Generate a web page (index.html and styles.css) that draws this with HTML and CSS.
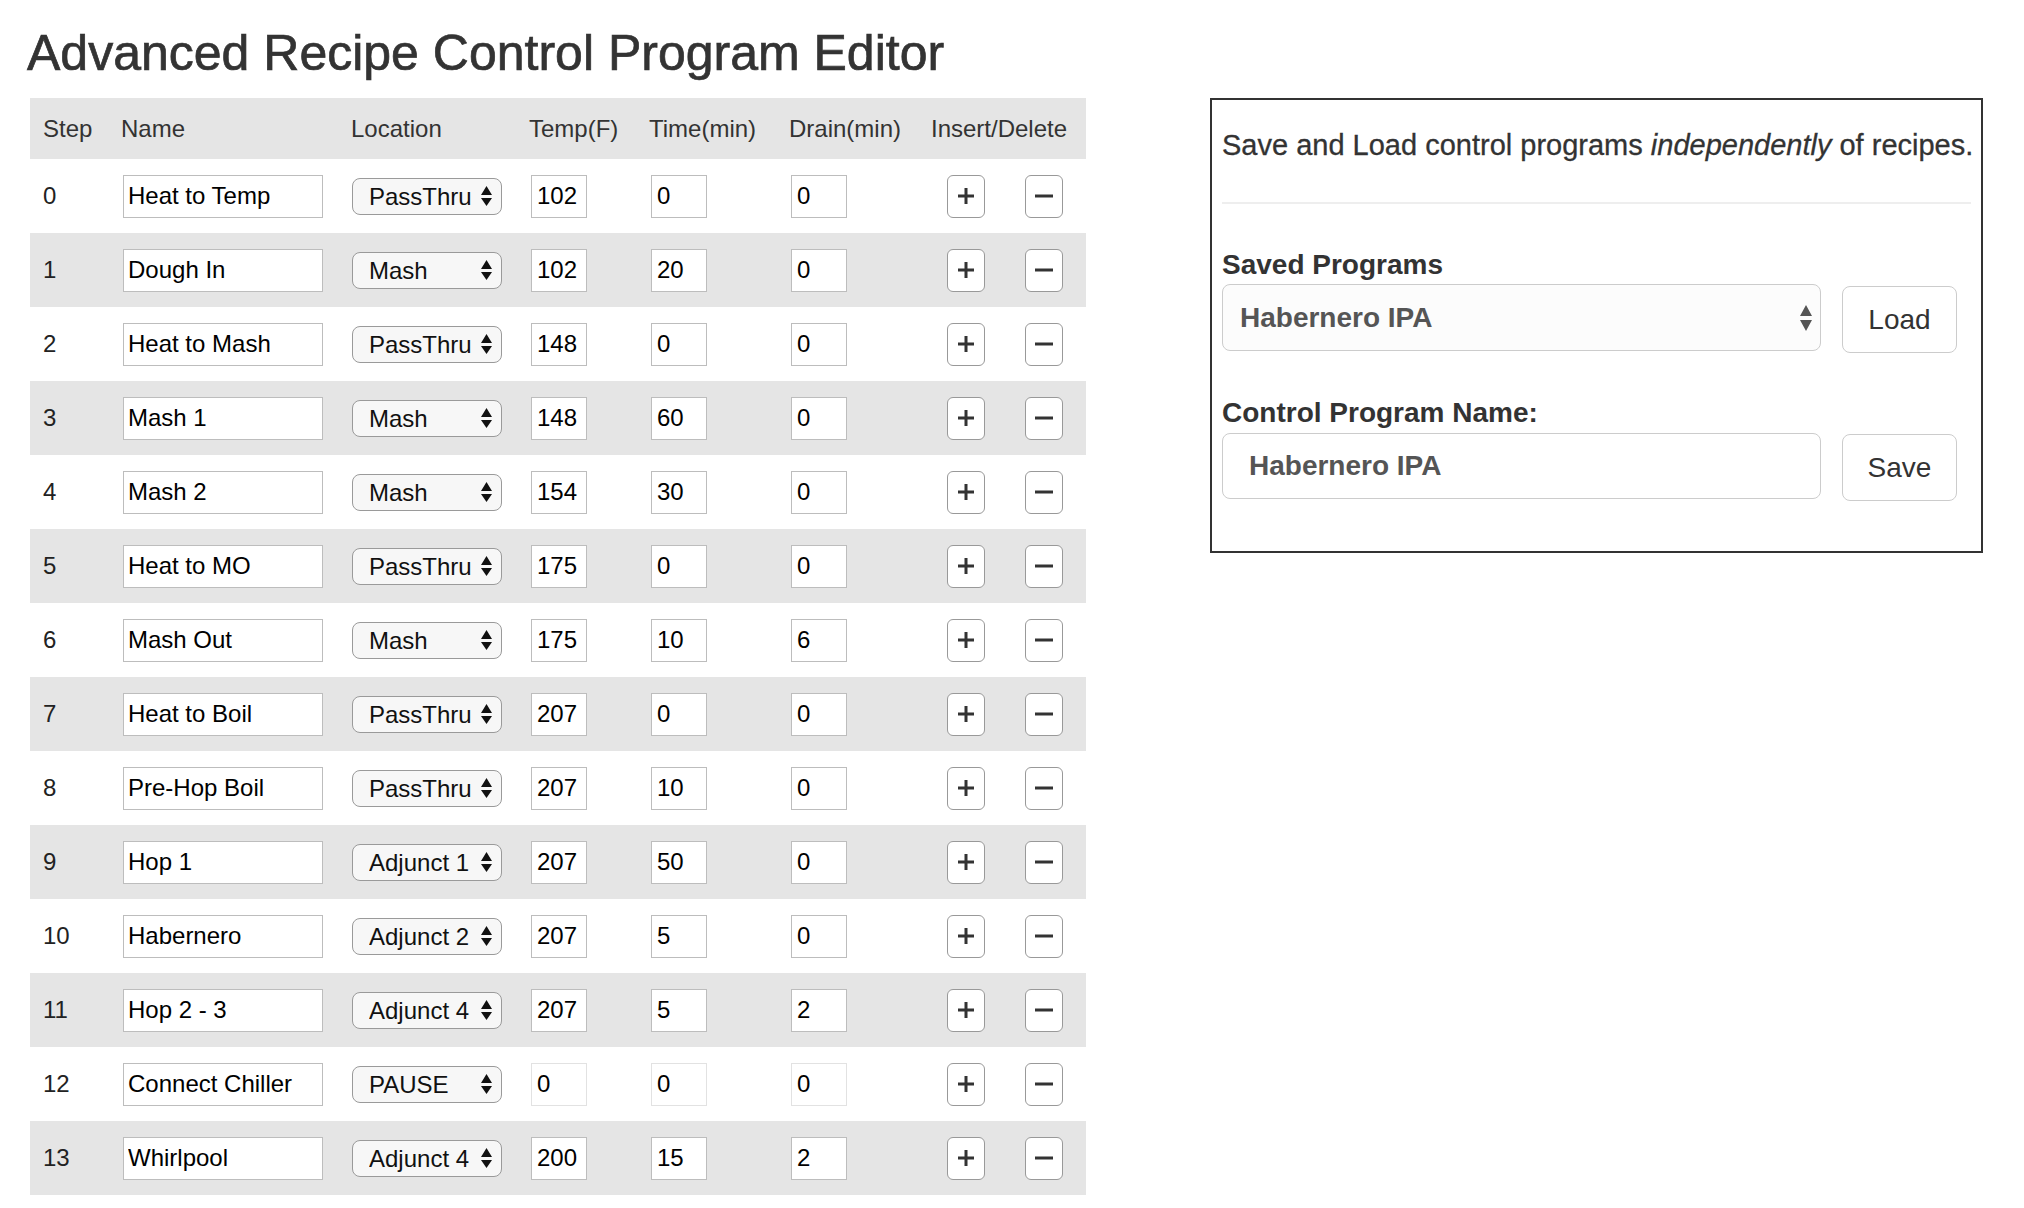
FILE: index.html
```html
<!DOCTYPE html>
<html lang="en">
<head>
    <meta charset="UTF-8">
    <title>Advanced Recipe Control Program Editor</title>
    <link rel="stylesheet" href="styles.css">
</head>
<body>
    <div class="page">
        <h1 class="title">Advanced Recipe Control Program Editor</h1>
        <div class="layout">
            <table class="steps">
                <colgroup>
                    <col class="c-step"><col class="c-name"><col class="c-loc"><col class="c-temp"><col class="c-time"><col class="c-drain"><col class="c-act">
                </colgroup>
                <thead>
                    <tr>
                        <th>Step</th><th>Name</th><th>Location</th><th>Temp(F)</th><th>Time(min)</th><th>Drain(min)</th><th>Insert/Delete</th>
                    </tr>
                </thead>
                <tbody id="step-body"></tbody>
            </table>

            <div class="panel">
                <p class="panel-intro">Save and Load control programs <em>independently</em> of recipes.</p>
                <hr>
                <label class="panel-label" for="saved">Saved Programs</label>
                <div class="panel-row">
                    <span class="select-wrap big">
                        <select id="saved" class="panel-select">
                            <option selected>Habernero IPA</option>
                            <option>Pale Ale</option>
                        </select>
                        <svg class="arrows" width="12" height="26" viewBox="0 0 12 26"><path d="M6 0L12 11H0Z M6 26L12 15H0Z" fill="#555"/></svg>
                    </span>
                    <button class="panel-btn load">Load</button>
                </div>
                <label class="panel-label second" for="prog-name">Control Program Name:</label>
                <div class="panel-row">
                    <input id="prog-name" class="panel-input" type="text" value="Habernero IPA">
                    <button class="panel-btn save">Save</button>
                </div>
            </div>
        </div>
    </div>

    <script>
        const steps = [
            ['Heat to Temp', 'PassThru', 102, 0, 0],
            ['Dough In', 'Mash', 102, 20, 0],
            ['Heat to Mash', 'PassThru', 148, 0, 0],
            ['Mash 1', 'Mash', 148, 60, 0],
            ['Mash 2', 'Mash', 154, 30, 0],
            ['Heat to MO', 'PassThru', 175, 0, 0],
            ['Mash Out', 'Mash', 175, 10, 6],
            ['Heat to Boil', 'PassThru', 207, 0, 0],
            ['Pre-Hop Boil', 'PassThru', 207, 10, 0],
            ['Hop 1', 'Adjunct 1', 207, 50, 0],
            ['Habernero', 'Adjunct 2', 207, 5, 0],
            ['Hop 2 - 3', 'Adjunct 4', 207, 5, 2],
            ['Connect Chiller', 'PAUSE', 0, 0, 0],
            ['Whirlpool', 'Adjunct 4', 200, 15, 2]
        ];
        const locations = ['PassThru', 'Mash', 'Adjunct 1', 'Adjunct 2', 'Adjunct 3', 'Adjunct 4', 'PAUSE'];

        const body = document.getElementById('step-body');
        steps.forEach((s, i) => {
            const opts = locations.map(l => `<option${l === s[1] ? ' selected' : ''}>${l}</option>`).join('');
            const numClass = s[1] === 'PAUSE' ? 'num faded' : 'num';
            const row = document.createElement('tr');
            row.innerHTML = `
                <td>${i}</td>
                <td><input class="name" type="text" value="${s[0]}"></td>
                <td><span class="select-wrap"><select class="loc">${opts}</select><svg class="arrows" width="11" height="20" viewBox="0 0 11 20"><path d="M5.5 0L11 9H0Z M5.5 20L11 12H0Z" fill="#111"/></svg></span></td>
                <td><input class="${numClass}" type="text" value="${s[2]}"></td>
                <td><input class="${numClass}" type="text" value="${s[3]}"></td>
                <td><input class="${numClass}" type="text" value="${s[4]}"></td>
                <td>
                    <div class="actions">
                        <button class="btn-step" title="Insert"><svg width="18" height="18" viewBox="0 0 18 18"><path d="M9 1V17M1 9H17" stroke="#333" stroke-width="3"/></svg></button>
                        <button class="btn-step" title="Delete"><svg width="18" height="18" viewBox="0 0 18 18"><path d="M0 9H18" stroke="#333" stroke-width="3"/></svg></button>
                    </div>
                </td>`;
            body.appendChild(row);
        });
    </script>
</body>
</html>
```

FILE: styles.css
```css
body {
    margin: 0;
    font-family: "Liberation Sans", Arial, sans-serif;
    color: #333;
    background-color: #fff;
}
.page {
    padding: 26px 30px 0 30px;
}
.title {
    margin: 0 0 17px -3px;
    font-size: 50px;
    line-height: 55px;
    font-weight: normal;
    -webkit-text-stroke: 0.7px #333;
    color: #333;
}
.layout {
    display: flex;
    align-items: flex-start;
    gap: 124px;
}

/* step table */
.steps {
    width: 1056px;
    table-layout: fixed;
    border-collapse: collapse;
    font-size: 24px;
    color: #222;
}
.c-step { width: 78px; }
.c-name { width: 230px; }
.c-loc { width: 178px; }
.c-temp { width: 120px; }
.c-time { width: 140px; }
.c-drain { width: 142px; }
.c-act { width: 168px; }
.steps th {
    height: 61px;
    padding: 0 0 0 13px;
    text-align: left;
    font-weight: normal;
    color: #333;
    background-color: #e5e5e5;
    white-space: nowrap;
}
.steps td {
    height: 74px;
    padding: 0 0 0 13px;
    vertical-align: middle;
}
.steps tbody tr:nth-child(even) {
    background-color: #e5e5e5;
}
.steps input {
    box-sizing: border-box;
    height: 43px;
    margin: 0 0 0 2px;
    padding: 0 4px;
    border: 1px solid #bdbdbd;
    border-radius: 0;
    font-family: inherit;
    font-size: 24px;
    color: #000;
    background-color: #fff;
    vertical-align: middle;
}
.steps input.name { width: 200px; }
.steps input.num { width: 56px; padding-left: 5px; }
.steps input.faded { border-color: #e2e2e2; }

.select-wrap {
    position: relative;
    display: inline-block;
    vertical-align: middle;
}
.select-wrap .arrows {
    position: absolute;
    top: 50%;
    right: 10px;
    transform: translateY(-50%);
    pointer-events: none;
}
.loc {
    appearance: none;
    -webkit-appearance: none;
    box-sizing: border-box;
    width: 150px;
    height: 37px;
    margin-left: 1px;
    padding: 0 26px 0 16px;
    border: 1.5px solid #9a9a9a;
    border-radius: 8px;
    font-family: inherit;
    font-size: 24px;
    color: #111;
    background-color: #f7f7f7;
}
.actions {
    display: flex;
    align-items: center;
    gap: 40px;
    padding-left: 16px;
}
.btn-step {
    box-sizing: border-box;
    width: 38px;
    height: 43px;
    padding: 0;
    border: 1.5px solid #999;
    border-radius: 6px;
    background-color: #fff;
    display: flex;
    align-items: center;
    justify-content: center;
}

/* save / load panel */
.panel {
    box-sizing: border-box;
    width: 773px;
    padding: 26px 10px 50px 10px;
    border: 2px solid #333;
}
.panel-intro {
    margin: 0;
    font-size: 29px;
    line-height: 38px;
    white-space: nowrap;
    -webkit-text-stroke: 0.3px #333;
}
.panel hr {
    margin: 38px 0 0 0;
    border: none;
    border-top: 2px solid #eee;
}
.panel-label {
    display: block;
    margin-top: 42px;
    font-size: 28px;
    line-height: 38px;
    font-weight: bold;
    color: #333;
}
.panel-label.second {
    margin-top: 41px;
}
.panel-row {
    display: flex;
    align-items: flex-start;
    gap: 21px;
}
.select-wrap.big .arrows {
    right: 9px;
}
.panel-select,
.panel-input {
    box-sizing: border-box;
    width: 599px;
    height: 67px;
    border: 1.5px solid #ccc;
    border-radius: 8px;
    font-family: inherit;
    font-size: 28px;
    font-weight: bold;
    color: #555;
}
.panel-select {
    appearance: none;
    -webkit-appearance: none;
    padding: 0 30px 0 17px;
    background-color: #fcfcfc;
}
.panel-input {
    height: 66px;
    margin-top: 1px;
    padding: 0 20px 0 26px;
    background-color: #fff;
}
.panel-btn {
    box-sizing: border-box;
    width: 115px;
    height: 67px;
    margin-top: 2px;
    border: 1.5px solid #ccc;
    border-radius: 8px;
    background-color: #fff;
    font-family: inherit;
    font-size: 28px;
    color: #333;
}
```
